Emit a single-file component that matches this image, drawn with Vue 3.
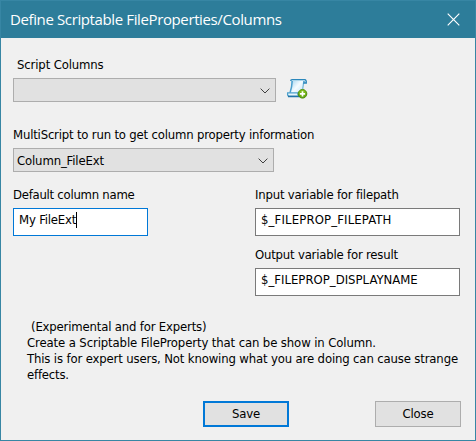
<script setup>
import { ref } from 'vue'

const columnName = ref('My FileExt')
const inputVariable = ref('$_FILEPROP_FILEPATH')
const outputVariable = ref('$_FILEPROP_DISPLAYNAME')
</script>

<template>
  <main class="dialog">
    <header class="titlebar">
      <h1 class="title">Define Scriptable FileProperties/Columns</h1>
      <svg class="close-icon" width="13" height="13" viewBox="0 0 13 13" aria-label="Close window">
        <path d="M.7 .7 12.3 12.3M12.3 .7 .7 12.3" fill="none" stroke="#fff" stroke-width="1.15" />
      </svg>
    </header>

    <div class="body">
      <section class="group first">
        <div class="label indent"><span class="t-script">Script Columns</span></div>
        <div class="line">
          <div class="combo wide">
            <span></span>
            <svg class="chevron" width="10" height="6" viewBox="0 0 10 6"><path d="M.6 .6 5 5 9.4 .6" /></svg>
          </div>
          <svg class="script-icon" width="22" height="22" viewBox="0 0 22 22">
            <defs>
              <linearGradient id="paper" x1="0" y1="0" x2="1" y2="1">
                <stop offset="0" stop-color="#9fd2ee" />
                <stop offset=".45" stop-color="#f4fbff" />
                <stop offset="1" stop-color="#b5dcf0" />
              </linearGradient>
              <linearGradient id="badge" x1="0" y1="0" x2="0" y2="1">
                <stop offset="0" stop-color="#8cc520" />
                <stop offset="1" stop-color="#5a9f0c" />
              </linearGradient>
            </defs>
            <path d="M5 2.500H17.800L16 18.500H4Q5 12 5.300 6Z" fill="url(#paper)" />
            <path d="M6.200 3Q5.900 9.500 4 15" fill="none" stroke="#4a9fce" stroke-width="1.500" />
            <path d="M17.600 4.800 16.700 11" fill="none" stroke="#6fb4d8" stroke-width="1.200" />
            <path d="M4.800 3Q4.800 1.700 6 1.700H18.800Q20.500 1.900 20.300 5H17.800L18 3" fill="#d8effa" stroke="#2b87bb" stroke-width="1.300" />
            <path d="M1.600 14.800H12Q11.600 17.600 13.500 18.500H3Q1.200 18 1.600 14.800Z" fill="#e6f5fc" stroke="#4b9fcb" stroke-width="1.200" />
            <path d="M2 18.400H14" stroke="#1f73a8" stroke-width="1.700" />
            <circle cx="16.500" cy="15.800" r="4.300" fill="url(#badge)" stroke="#4a8d08" />
            <path d="M16.500 13.200V18.400M13.900 15.800H19.100" stroke="#fff" stroke-width="1.700" />
          </svg>
        </div>
      </section>

      <section class="group">
        <div class="label"><span class="t-multi">MultiScript to run to get column property information</span></div>
        <div class="combo">
          <span class="t-combo">Column_FileExt</span>
          <svg class="chevron" width="10" height="6" viewBox="0 0 10 6"><path d="M.6 .6 5 5 9.4 .6" /></svg>
        </div>
      </section>

      <div class="fields">
        <section class="name-col">
          <div class="label"><span class="t-default">Default column name</span></div>
          <div class="field focused"><span class="t-name">{{ columnName }}</span><i class="caret"></i></div>
        </section>
        <div class="var-col">
          <section>
            <div class="label"><span class="t-input">Input variable for filepath</span></div>
            <div class="field"><span class="t-path">{{ inputVariable }}</span></div>
          </section>
          <section>
            <div class="label"><span class="t-output">Output variable for result</span></div>
            <div class="field"><span class="t-display">{{ outputVariable }}</span></div>
          </section>
        </div>
      </div>

      <div class="note">
        <div class="note-head"><span class="t-experts">(Experimental and for Experts)</span></div>
        <div><span class="t-create">Create a Scriptable FileProperty that can be show in Column.</span></div>
        <div><span class="t-warning">This is for expert users, Not knowing what you are doing can cause strange</span></div>
        <div><span class="t-effects">effects.</span></div>
      </div>

      <footer class="actions">
        <button class="btn default" type="button">Save</button>
        <button class="btn" type="button">Close</button>
      </footer>
    </div>
  </main>
</template>

<style>
body { margin: 0; overflow: hidden; }
</style>

<style scoped>
.dialog {
  box-sizing: border-box;
  width: 476px;
  height: 441px;
  display: flex;
  flex-direction: column;
  background: #f0f0f0;
  border: 1px solid #3786a4;
  font: 13px/16px "DejaVu Sans Condensed", "DejaVu Sans", sans-serif;
  color: #000;
  white-space: nowrap;
}
.titlebar {
  flex: none;
  display: flex;
  align-items: center;
  justify-content: space-between;
  height: 37px;
  padding: 0 15px 0 9px;
  background: #2d7d9a;
}
.title {
  margin: 0;
  padding-bottom: 1px;
  font: 400 15px/22px "Open Sans", "Noto Sans", sans-serif;
  letter-spacing: -.38px;
  color: #fff;
}
.close-icon { display: block; }
.body { padding: 19px 14px 0 12px; }
.label { height: 16px; margin-bottom: 5px; }
.indent { padding-left: 4px; }
.group { margin-bottom: 15px; }
.first { margin-bottom: 25px; }
.line { display: flex; gap: 10px; }
.script-icon { display: block; }
.combo {
  box-sizing: border-box;
  width: 261px;
  height: 24px;
  display: flex;
  align-items: center;
  justify-content: space-between;
  padding: 1px 5px 0 3px;
  border: 1px solid #adadad;
  background: #e1e1e1;
}
.wide { width: 263px; }
.chevron path { fill: none; stroke: #404040; stroke-width: 1; }
.fields { display: flex; justify-content: space-between; }
.name-col { width: 135px; }
.var-col { width: 205px; display: grid; gap: 11px; margin-right: 1px; }
.field {
  box-sizing: border-box;
  height: 28px;
  display: flex;
  padding: 3px 5px;
  border: 1px solid #7a7a7a;
  background: #fff;
}
.focused { border-color: #0078d7; }
.caret { width: 1px; height: 16px; background: #000; }
.note { margin: 23px 0 18px 14px; }
.note-head { padding-left: 4px; }
.actions { display: flex; justify-content: flex-end; gap: 86px; }
.btn {
  box-sizing: border-box;
  width: 86px;
  height: 26px;
  padding: 0;
  border: 1px solid #adadad;
  background: #e1e1e1;
  font: inherit;
  letter-spacing: -.2px;
  color: #000;
}
.default { border: 2px solid #0078d7; }

.t-script { letter-spacing: -.14px; }
.t-multi { letter-spacing: -.19px; }
.t-combo { letter-spacing: -.15px; }
.t-default { letter-spacing: -.26px; }
.t-name { letter-spacing: -.2px; }
.t-input { letter-spacing: -.2px; }
.t-path { letter-spacing: .14px; }
.t-output { letter-spacing: -.2px; }
.t-experts { letter-spacing: -.18px; }
.t-create { letter-spacing: -.12px; }
.t-warning { letter-spacing: -.15px; }
.t-effects { letter-spacing: -.2px; }
</style>
